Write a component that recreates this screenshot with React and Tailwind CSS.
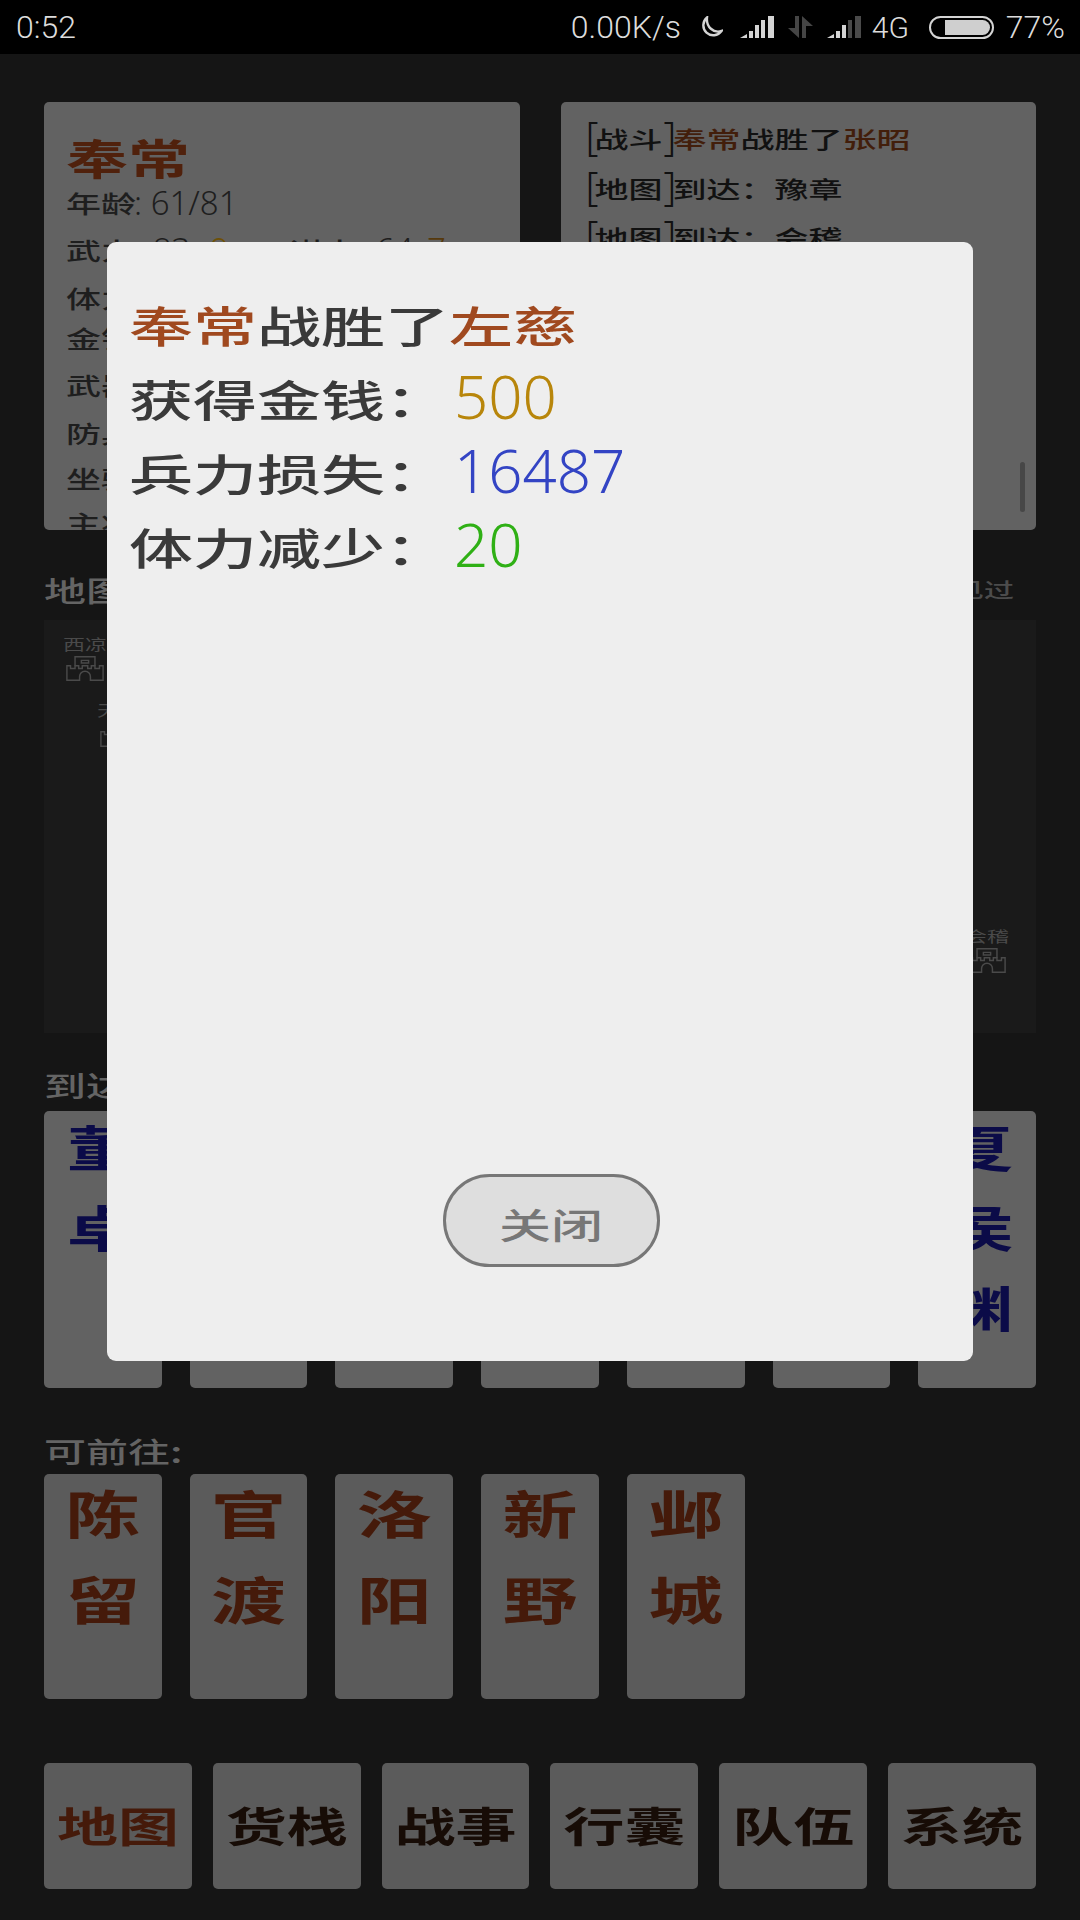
import React from 'react';

// the game's font is a wide, flat lishu face, so squash the CJK glyphs
const Flat = ({ children, className = '' }) => (
  <span className={`inline-block origin-center scale-y-[.68] whitespace-pre font-['Noto_Sans_CJK_SC',sans-serif] ${className}`}>
    {children}
  </span>
);

const Num = ({ children, className = '' }) => (
  <span className={`whitespace-pre font-['Noto_Sans',sans-serif] font-light ${className}`}>{children}</span>
);

const Moon = () => (
  <svg width="25" height="23" viewBox="0 0 25 23" fill="none" className="ml-[17px]">
    <path d="M9 1.5A10 10 0 1 0 23.5 15C15.5 17.5 8 11 9 1.5z" stroke="#d4d4d4" strokeWidth="2.4" />
  </svg>
);

const Signal = ({ dim = 0, className = '' }) => (
  <svg width="34" height="22" viewBox="0 0 34 22" className={className}>
    <path d="M0 22l7-4v4z" fill="#d4d4d4" />
    {[
      [9, 15],
      [15, 9],
      [21, 4],
      [28, 0],
    ].map(([x, y], i) => (
      <rect key={x} x={x} y={y} width={x === 28 ? 6 : 4} height={22 - y} fill={i >= 4 - dim ? '#4a4a4a' : '#d4d4d4'} />
    ))}
  </svg>
);

const DataArrows = () => (
  <svg width="26" height="22" viewBox="0 0 26 22" className="ml-[14px]">
    <path d="M7 0h4v22L0 12h7zM14 0l11 10h-7v12h-4z" fill="#454545" />
  </svg>
);

const Battery = () => (
  <div className="ml-[16px] flex h-[23px] w-[65px] items-center justify-end rounded-full border-2 border-[#d4d4d4] p-[2px] pl-[14px]">
    <div className="h-full w-full rounded-r-full bg-[#cfcfcf]" />
  </div>
);

const StatusBar = () => (
  <div className="flex h-[54px] shrink-0 items-center justify-between bg-black pl-[16px] pr-[15px] font-['Roboto',sans-serif] text-[32px] font-light text-[#dcdcdc]">
    <span>0:52</span>
    <div className="flex items-center">
      <span>0.00K/s</span>
      <Moon />
      <Signal className="ml-[17px]" />
      <DataArrows />
      <Signal dim={2} className="ml-[13px]" />
      <span className="ml-[11px] w-[41px] text-[30px]">4G</span>
      <Battery />
      <span className="ml-[12px]">77%</span>
    </div>
  </div>
);

const stats = [
  ['武力', 'h-[54px]'],
  ['体力', 'h-[42px]'],
  ['金钱', 'h-[38px]'],
  ['武器', 'h-[56px]'],
  ['防具', 'h-[40px]'],
  ['坐骑', 'h-[50px]'],
  ['主将', 'h-[40px]'],
];

const HeroPanel = () => (
  <div className="h-[428px] overflow-hidden rounded-[5px] bg-[#626262] pl-[22px] pt-[30px] font-medium text-[#1e1e1e]">
    <div className="h-[51px] text-[62px] font-semibold leading-[50px] text-[#50210c]">
      <Flat>奉常</Flat>
    </div>
    <div className="flex h-[40px] items-center text-[35px]">
      <Flat>年龄</Flat>
      <Num className="-ml-[2px] text-[33px]">: 61/81</Num>
    </div>
    {stats.map(([label, h]) => (
      <div key={label} className={`flex items-center text-[35px] ${h}`}>
        <Flat>{label}</Flat>
        {label === '武力' && (
          <>
            <Num className="w-[74px] text-[33px]">: 83</Num>
            <Num className="w-[79px] text-[33px] text-[#6e5006]">9</Num>
            <Flat>谋力</Flat>
            <Num className="w-[68px] text-[33px]">: 64</Num>
            <Num className="text-[33px] text-[#56390c]">7</Num>
          </>
        )}
      </div>
    ))}
  </div>
);

const LogPanel = () => (
  <div className="relative h-[428px] overflow-hidden rounded-[5px] bg-[#626262] pl-[25px] pt-[11px] text-[34px] font-medium leading-[50px] text-[#111]">
    <div className="flex h-[50px] items-center">
      <Num className="-mt-[4px] w-[9px] text-[40px]">[</Num>
      <Flat>战斗</Flat>
      <Num className="-mt-[4px] w-[10px] pl-[1px] text-[40px]">]</Num>
      <Flat className="text-[#421e0b]">奉常</Flat>
      <Flat>战胜了</Flat>
      <Flat className="text-[#421e0b]">张昭</Flat>
    </div>
    {['豫章', '会稽'].map((city) => (
      <div key={city} className="flex h-[49px] items-center">
        <Num className="-mt-[4px] w-[9px] text-[40px]">[</Num>
        <Flat>地图</Flat>
        <Num className="-mt-[4px] w-[10px] pl-[1px] text-[40px]">]</Num>
        <Flat>到达：</Flat>
        <Flat>{city}</Flat>
      </div>
    ))}
    {/* Scrollbar */}
    <div className="absolute right-[11px] top-[360px] h-[50px] w-[5px] rounded-full bg-[#474747]" />
  </div>
);

const Castle = () => (
  <svg width="38" height="27" viewBox="0 0 42 28" fill="none" stroke="#4a4a4a" strokeWidth="1.6" className="mt-[2px]">
    <path d="M1 27V11h4v3h5v-3h4v3h4v-3h6v3h4v-3h4v3h5v-3h4v16H27v-4a6 6 0 0 0-12 0v4z" />
    <path d="M10 11V1h22v10M17 5h8v3h-8z" />
  </svg>
);

const MapNode = ({ name, className }) => (
  <div className={`absolute flex w-[46px] flex-col items-center ${className}`}>
    <div className="h-[19px] whitespace-nowrap text-[22px] leading-[19px] text-[#4a4a4a]">
      <Flat>{name}</Flat>
    </div>
    <Castle />
  </div>
);

const GameMap = () => (
  <div className="relative h-[413px] overflow-hidden bg-[#1a1a1a]">
    <MapNode name="西凉" className="left-[18px] top-[14px]" />
    <MapNode name="天水" className="left-[52px] top-[80px]" />
    <MapNode name="会稽" className="left-[920px] top-[306px]" />
  </div>
);

const Card = ({ chars, color, size, pitch, className }) => (
  <div className={`flex flex-col items-center rounded-[5px] font-semibold ${className}`}>
    <div className="-mt-[5px] flex flex-col items-center">
      {chars.map((c, i) => (
        <Flat key={i} className={`${color} ${size} ${pitch}`}>
          {c}
        </Flat>
      ))}
    </div>
  </div>
);

const generals = [['董', '卓'], [], [], [], [], [], ['夏', '侯', '渊']];
const cities = [
  ['陈', '留'],
  ['官', '渡'],
  ['洛', '阳'],
  ['新', '野'],
  ['邺', '城'],
];
const menu = ['地图', '货栈', '战事', '行囊', '队伍', '系统'];

const Label = ({ children, className = '' }) => (
  <div className={`font-medium text-[#646464] ${className}`}>
    <Flat>{children}</Flat>
  </div>
);

const Dialog = () => (
  <div className="absolute left-[107px] top-[242px] flex h-[1119px] w-[866px] flex-col rounded-[9px] bg-[#eeeeee] px-[22px] pt-[45px] font-medium text-[#3a3a3a]">
    <div className="flex h-[74px] items-center text-[64px] leading-[74px]">
      <Flat className="text-[#a0491f]">奉常</Flat>
      <Flat>战胜了</Flat>
      <Flat className="text-[#a0491f]">左慈</Flat>
    </div>
    {[
      ['获得金钱：', '500', 'text-[#b8860b]'],
      ['兵力损失：', '16487', 'text-[#3344c4]'],
      ['体力减少：', '20', 'text-[#2fb015]'],
    ].map(([label, value, color]) => (
      <div key={label} className="flex h-[74px] items-center text-[64px] leading-[74px]">
        <Flat>{label}</Flat>
        <Num className={`ml-[5px] -mt-[4px] text-[60px] ${color}`}>{value}</Num>
      </div>
    ))}
    <div className="mt-auto mb-[94px] flex justify-center">
      <button className="ml-[22px] flex h-[93px] w-[217px] items-center justify-center rounded-full border-[3px] border-[#777] bg-[#dedede] pt-[6px] text-[52px] font-medium text-[#777]">
        <Flat>关闭</Flat>
      </button>
    </div>
  </div>
);

export default function App() {
  return (
    <div className="relative flex h-[1920px] w-[1080px] flex-col overflow-hidden bg-[#151515]">
      <StatusBar />

      <div className="flex flex-col px-[44px] pt-[48px]">
        <div className="grid grid-cols-2 gap-[41px]">
          <HeroPanel />
          <LogPanel />
        </div>

        <div className="mt-[28px] flex h-[62px] items-center justify-between text-[42px] font-medium text-[#646464]">
          <Flat>地图：</Flat>
          <Flat className="mr-[22px] text-[30px] text-[#4c4c4c]">见过</Flat>
        </div>
        <GameMap />

        <Label className="mt-[30px] h-[48px] text-[42px] leading-[44px]">到达：</Label>
        <div className="grid grid-cols-7 gap-[28px]">
          {generals.map((g, i) => (
            <Card
              key={i}
              chars={g}
              color="text-[#0b0b48]"
              size="text-[72px]"
              pitch="leading-[80px]"
              className="h-[277px] bg-[#626262]"
            />
          ))}
        </div>

        <Label className="mt-[44px] h-[42px] text-[42px] leading-[38px]">可前往:</Label>
        <div className="grid grid-cols-7 gap-[28px]">
          {cities.map((c) => (
            <Card
              key={c[0]}
              chars={c}
              color="text-[#451a0a]"
              size="text-[75px]"
              pitch="leading-[86px]"
              className="h-[225px] bg-[#5b5b5b]"
            />
          ))}
        </div>

        <div className="mt-[64px] grid grid-cols-6 gap-[21px]">
          {menu.map((m, i) => (
            <div key={m} className="flex h-[126px] items-center justify-center rounded-[5px] bg-[#5b5b5b] pb-[4px] text-[61px] font-semibold">
              <Flat className={i === 0 ? 'text-[#451a0a]' : 'text-[#170c06]'}>{m}</Flat>
            </div>
          ))}
        </div>
      </div>

      <Dialog />
    </div>
  );
}
